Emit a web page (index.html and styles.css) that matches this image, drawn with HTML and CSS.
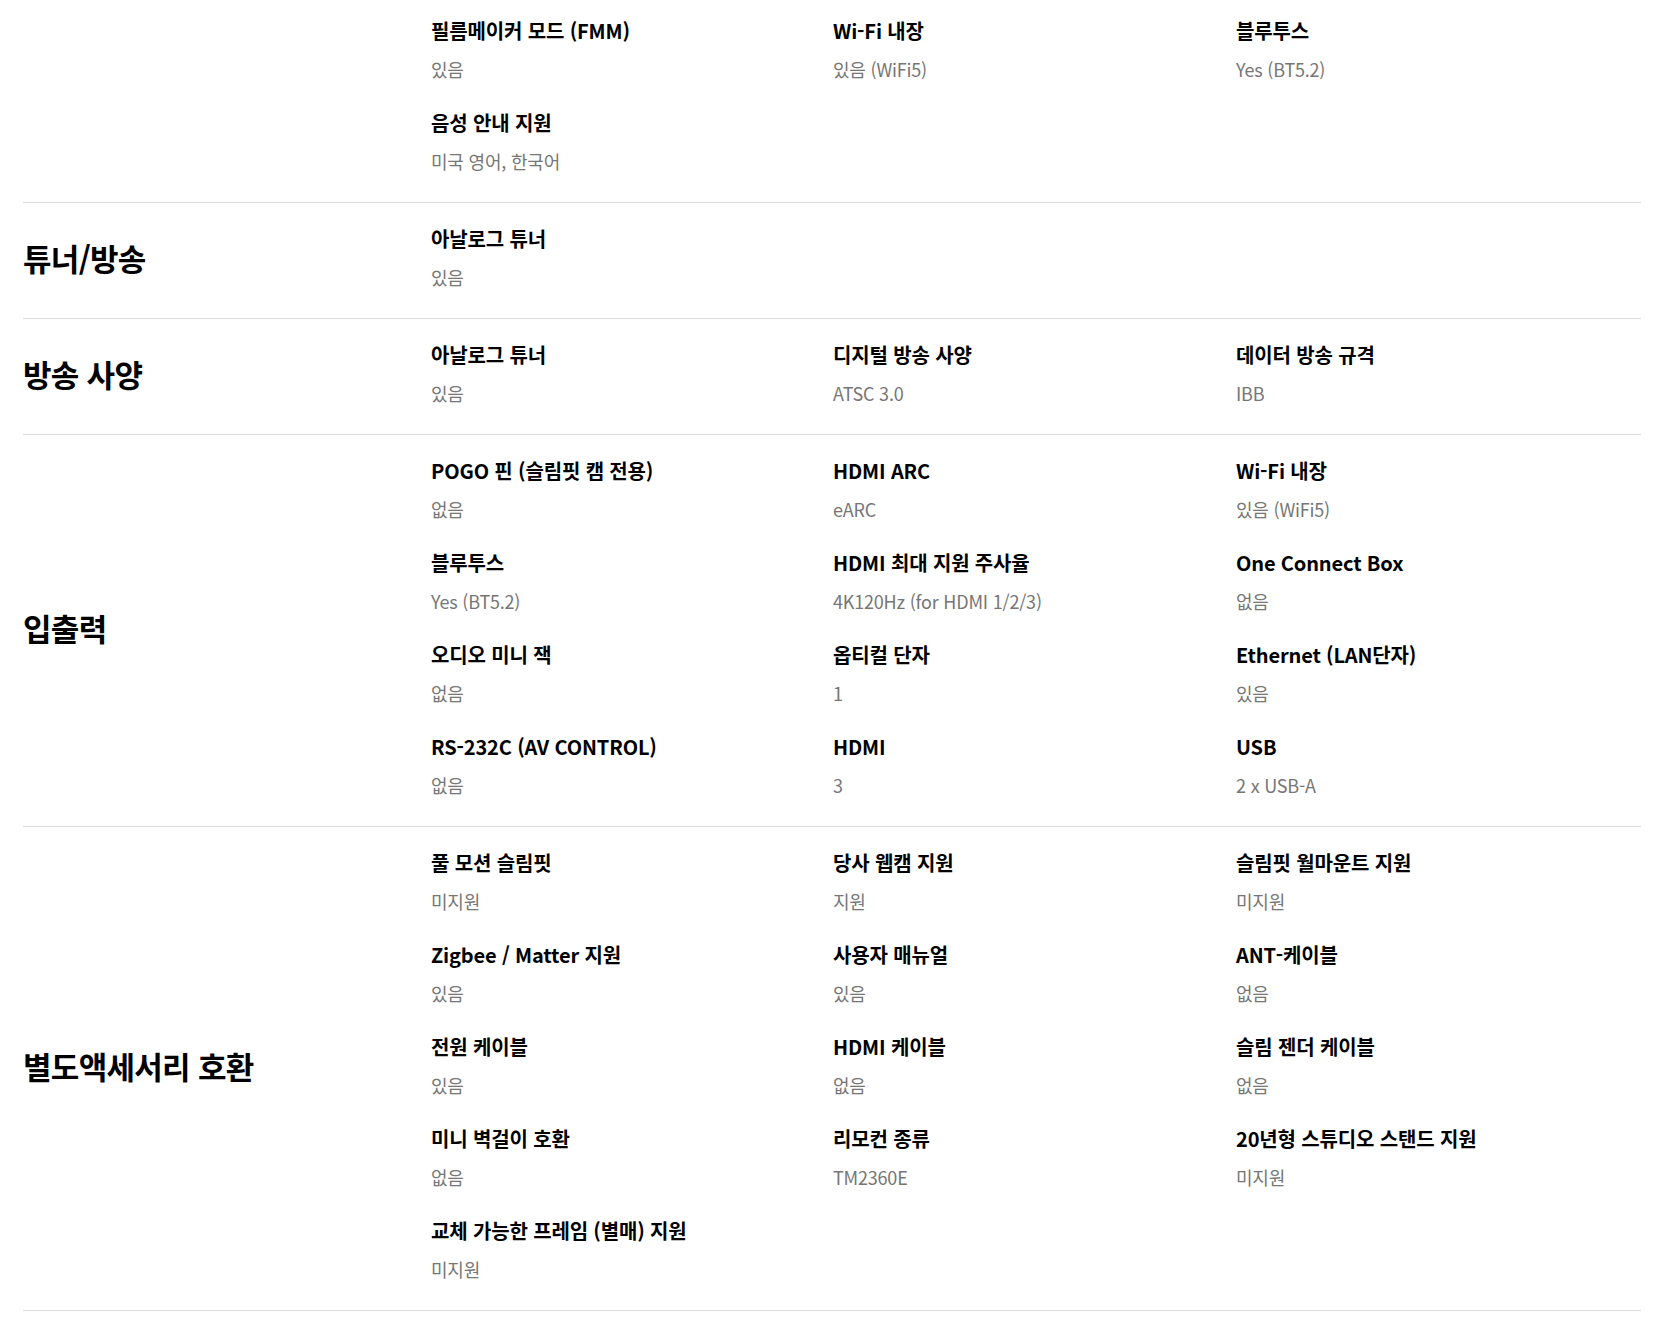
FILE: index.html
```html
<!DOCTYPE html>
<html lang="ko">
<head>
<meta charset="utf-8">
<title>스펙</title>
<link rel="stylesheet" href="styles.css">
</head>
<body>
<div class="specs">
  <section class="group group-first">
    <h3 class="group-title"></h3>
    <div class="group-items">
      <div class="item"><div class="label">필름메이커 모드 (FMM)</div><div class="value">있음</div></div>
      <div class="item"><div class="label">Wi-Fi 내장</div><div class="value">있음 (WiFi5)</div></div>
      <div class="item"><div class="label">블루투스</div><div class="value">Yes (BT5.2)</div></div>
      <div class="item"><div class="label">음성 안내 지원</div><div class="value">미국 영어, 한국어</div></div>
    </div>
  </section>
  <section class="group">
    <h3 class="group-title">튜너/방송</h3>
    <div class="group-items">
      <div class="item"><div class="label">아날로그 튜너</div><div class="value">있음</div></div>
    </div>
  </section>
  <section class="group">
    <h3 class="group-title">방송 사양</h3>
    <div class="group-items">
      <div class="item"><div class="label">아날로그 튜너</div><div class="value">있음</div></div>
      <div class="item"><div class="label">디지털 방송 사양</div><div class="value">ATSC 3.0</div></div>
      <div class="item"><div class="label">데이터 방송 규격</div><div class="value">IBB</div></div>
    </div>
  </section>
  <section class="group">
    <h3 class="group-title">입출력</h3>
    <div class="group-items">
      <div class="item"><div class="label">POGO 핀 (슬림핏 캠 전용)</div><div class="value">없음</div></div>
      <div class="item"><div class="label">HDMI ARC</div><div class="value">eARC</div></div>
      <div class="item"><div class="label">Wi-Fi 내장</div><div class="value">있음 (WiFi5)</div></div>
      <div class="item"><div class="label">블루투스</div><div class="value">Yes (BT5.2)</div></div>
      <div class="item"><div class="label">HDMI 최대 지원 주사율</div><div class="value">4K120Hz (for HDMI 1/2/3)</div></div>
      <div class="item"><div class="label">One Connect Box</div><div class="value">없음</div></div>
      <div class="item"><div class="label">오디오 미니 잭</div><div class="value">없음</div></div>
      <div class="item"><div class="label">옵티컬 단자</div><div class="value">1</div></div>
      <div class="item"><div class="label">Ethernet (LAN단자)</div><div class="value">있음</div></div>
      <div class="item"><div class="label">RS-232C (AV CONTROL)</div><div class="value">없음</div></div>
      <div class="item"><div class="label">HDMI</div><div class="value">3</div></div>
      <div class="item"><div class="label">USB</div><div class="value">2 x USB-A</div></div>
    </div>
  </section>
  <section class="group">
    <h3 class="group-title">별도액세서리 호환</h3>
    <div class="group-items">
      <div class="item"><div class="label">풀 모션 슬림핏</div><div class="value">미지원</div></div>
      <div class="item"><div class="label">당사 웹캠 지원</div><div class="value">지원</div></div>
      <div class="item"><div class="label">슬림핏 월마운트 지원</div><div class="value">미지원</div></div>
      <div class="item"><div class="label">Zigbee / Matter 지원</div><div class="value">있음</div></div>
      <div class="item"><div class="label">사용자 매뉴얼</div><div class="value">있음</div></div>
      <div class="item"><div class="label">ANT-케이블</div><div class="value">없음</div></div>
      <div class="item"><div class="label">전원 케이블</div><div class="value">있음</div></div>
      <div class="item"><div class="label">HDMI 케이블</div><div class="value">없음</div></div>
      <div class="item"><div class="label">슬림 젠더 케이블</div><div class="value">없음</div></div>
      <div class="item"><div class="label">미니 벽걸이 호환</div><div class="value">없음</div></div>
      <div class="item"><div class="label">리모컨 종류</div><div class="value">TM2360E</div></div>
      <div class="item"><div class="label">20년형 스튜디오 스탠드 지원</div><div class="value">미지원</div></div>
      <div class="item"><div class="label">교체 가능한 프레임 (별매) 지원</div><div class="value">미지원</div></div>
    </div>
  </section>
</div>
</body>
</html>
```

FILE: styles.css
```css
html, body {
  margin: 0;
  padding: 0;
  background: #fff;
}

body {
  font-family: "Noto Sans CJK KR", "Noto Sans", sans-serif;
  color: #000;
}

.specs {
  margin-left: 23px;
  width: 1618px;
}

.group {
  display: flex;
  border-bottom: 1px solid #dddddd;
}

.group-title {
  flex: 0 0 408px;
  margin: 0;
  padding-bottom: 5px;
  display: flex;
  align-items: center;
  font-size: 31px;
  font-weight: 700;
  letter-spacing: -0.7px;
  line-height: 40px;
}

.group-items {
  flex: 1;
  display: grid;
  grid-template-columns: 402px 403px 1fr;
  padding-top: 23px;
}

.group-first .group-items {
  padding-top: 18px;
}

.item {
  padding-bottom: 29px;
}

.label {
  font-size: 20px;
  font-weight: 700;
  line-height: 26px;
  letter-spacing: -0.15px;
  color: #000;
}

.value {
  margin-top: 13px;
  font-size: 18px;
  font-weight: 400;
  line-height: 24px;
  letter-spacing: -0.2px;
  color: #767676;
}
```
